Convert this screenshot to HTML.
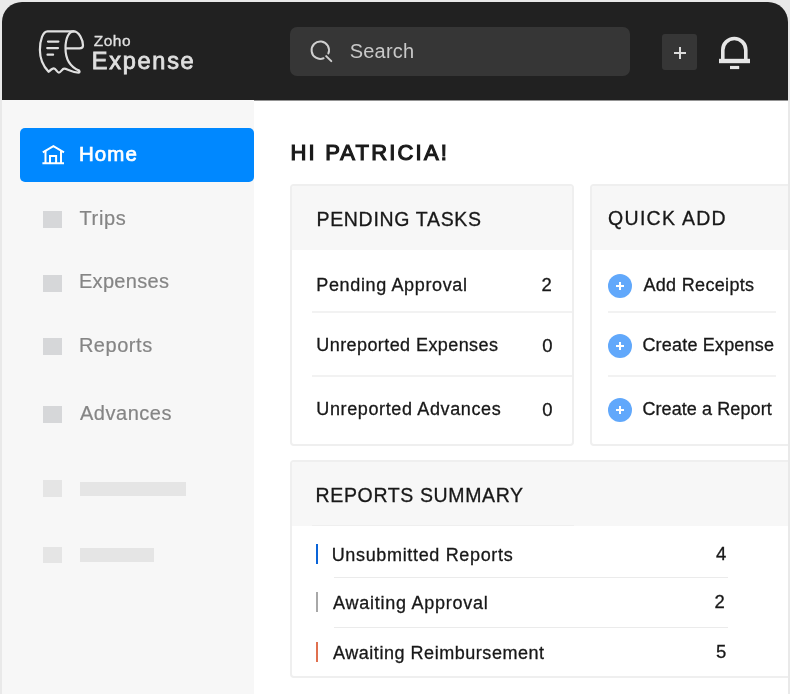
<!DOCTYPE html>
<html><head><meta charset="utf-8">
<style>
*{margin:0;padding:0;box-sizing:border-box}
html,body{width:790px;height:694px;overflow:hidden;background:#e9e9e9;font-family:"Liberation Sans",sans-serif;position:relative}
.frame{will-change:transform;position:absolute;left:2px;top:2px;width:786px;height:692px;background:#212121;border-radius:20px 20px 0 0;overflow:hidden}
.b{position:absolute}
.t{position:absolute;white-space:nowrap;line-height:1}
</style></head><body>
<div class="frame">
<div class="b" style="left:0;top:98px;width:786px;height:600px;background:#fff"></div>
<div class="b" style="left:0;top:98px;width:252px;height:600px;background:#f7f7f7"></div>
<div class="b" style="left:252px;top:98px;width:534px;height:1px;background:rgba(0,0,0,.42)"></div>
<!-- logo -->
<svg class="b" style="left:-2px;top:-2px" width="120" height="100" viewBox="0 0 120 100" fill="none" stroke="#e0e0e0" stroke-width="2.2" stroke-linecap="round" stroke-linejoin="round">
<path d="M73.7 31.4 L47.5 31.4 C43 31.4 39.9 40 39.9 50 C39.9 59 43.5 66.5 48.6 71.8 C50.5 70 52 68.4 53.9 68.4 C56 68.4 57 72.6 58.9 72.6 C60.8 72.6 62.2 68.6 64.1 68.6 C67 68.6 72 72.6 78.5 72.6 C80 72.6 79.8 71 78.8 70.5"/>
<path d="M79.5 48.3 L65.5 48.3 C65.5 38 68.8 31.4 73.7 31.4 C79 31.4 83 40 83 45.5 C83 47.3 81.5 48.3 79.5 48.3 M65.5 48.3 C65.5 60 70.8 67 78.8 70.5"/>
<path d="M48 41.6 L58.4 41.6 M47.2 48.1 L58 48.1 M47.5 54.7 L53.1 54.7"/>
</svg>
<!-- search -->
<div class="b" style="left:288px;top:25px;width:340px;height:49px;background:#363636;border-radius:7px"></div>
<svg class="b" style="left:-2px;top:-2px" width="790" height="100" viewBox="0 0 790 100" fill="none" stroke="#d0d0d0" stroke-width="2" stroke-linecap="round">
<path d="M323.56 58.27 A8.7 8.7 0 1 1 328.37 53.46"/>
<path d="M326.2 56.1 L331.3 61.1"/>
</svg>
<!-- plus btn -->
<div class="b" style="left:660px;top:32px;width:35px;height:36px;background:#363636;border-radius:3px"></div>
<div class="b" style="left:672px;top:49.5px;width:12px;height:2.4px;background:#dcdcdc"></div>
<div class="b" style="left:676.8px;top:45px;width:2.4px;height:12px;background:#dcdcdc"></div>
<!-- bell -->
<svg class="b" style="left:-2px;top:-2px" width="790" height="100" viewBox="0 0 790 100" fill="none" stroke="#e6e6e6">
<path d="M722.8 59 L722.8 50 A11.5 11.5 0 0 1 745.8 50 L745.8 59" stroke-width="3.6"/>
<path d="M719 61 L750 61" stroke-width="4.4"/>
<path d="M730 67.5 L739.2 67.5" stroke-width="3.2"/>
</svg>
<!-- home button -->
<div class="b" style="left:18px;top:126px;width:234px;height:54px;background:#0088ff;border-radius:5px"></div>
<svg class="b" style="left:-2px;top:-2px" width="260" height="200" viewBox="0 0 260 200" fill="none" stroke="#fff" stroke-width="2">
<path d="M42.8 152.4 L53.4 146.2 L64 152.4" stroke-linejoin="miter"/>
<path d="M45.5 150.6 L45.5 163 M61 150.6 L61 163 M42.4 163.2 L64 163.2"/>
<path d="M50 163 L50 156 L56.1 156 L56.1 163"/>
</svg>
<!-- nav placeholders -->
<div class="b" style="left:41px;top:209px;width:19px;height:17px;background:#d6d7d9"></div>
<div class="b" style="left:41px;top:273px;width:19px;height:17px;background:#d6d7d9"></div>
<div class="b" style="left:41px;top:336px;width:19px;height:17px;background:#d6d7d9"></div>
<div class="b" style="left:41px;top:404px;width:19px;height:17px;background:#d6d7d9"></div>
<div class="b" style="left:40.5px;top:478px;width:19.5px;height:16.5px;background:#e5e5e5"></div>
<div class="b" style="left:78px;top:480px;width:106px;height:14px;background:#e5e5e5"></div>
<div class="b" style="left:40.5px;top:544.5px;width:19.5px;height:16.5px;background:#e5e5e5"></div>
<div class="b" style="left:78px;top:546px;width:74px;height:14px;background:#e5e5e5"></div>
<!-- cards -->
<div class="b" style="left:288px;top:182px;width:284px;height:262px;border:2px solid #efefef;border-radius:4px;background:#fff;overflow:hidden">
  <div class="b" style="left:0;top:0;right:0;height:64px;background:#f7f7f7"></div>
</div>
<div class="b" style="left:588px;top:182px;width:300px;height:262px;border:2px solid #efefef;border-radius:4px;background:#fff;overflow:hidden">
  <div class="b" style="left:0;top:0;right:0;height:64px;background:#f7f7f7"></div>
</div>
<div class="b" style="left:288px;top:458px;width:600px;height:218px;border:2px solid #efefef;border-radius:4px;background:#fff;overflow:hidden">
  <div class="b" style="left:0;top:0;right:0;height:64px;background:#f7f7f7"></div>
</div>
<!-- separators -->
<div class="b" style="left:310px;top:309px;width:260px;height:2px;background:#f2f2f2"></div>
<div class="b" style="left:310px;top:373px;width:260px;height:2px;background:#f2f2f2"></div>
<div class="b" style="left:606px;top:309px;width:168px;height:2px;background:#f2f2f2"></div>
<div class="b" style="left:606px;top:373px;width:168px;height:2px;background:#f2f2f2"></div>
<div class="b" style="left:332px;top:575px;width:394px;height:1px;background:#ebebeb"></div>
<div class="b" style="left:332px;top:625px;width:394px;height:1px;background:#ebebeb"></div>
<div class="b" style="left:310px;top:523px;width:262px;height:1px;background:#efefef"></div>
<!-- bars -->
<div class="b" style="left:314px;top:542px;width:2px;height:20px;background:#0a64d8"></div>
<div class="b" style="left:314px;top:590px;width:2px;height:20px;background:#a8a8a8"></div>
<div class="b" style="left:314px;top:640px;width:2px;height:20px;background:#e0704f"></div>
<!-- quick add circles -->
<div class="b" style="left:606px;top:272px;width:24px;height:24px;border-radius:50%;background:#61a8fb"></div>
<div class="b" style="left:606px;top:332px;width:24px;height:24px;border-radius:50%;background:#61a8fb"></div>
<div class="b" style="left:606px;top:396px;width:24px;height:24px;border-radius:50%;background:#61a8fb"></div>
<div class="b" style="left:614px;top:283px;width:8px;height:2px;background:#fff"></div>
<div class="b" style="left:617px;top:280px;width:2px;height:8px;background:#fff"></div>
<div class="b" style="left:614px;top:343px;width:8px;height:2px;background:#fff"></div>
<div class="b" style="left:617px;top:340px;width:2px;height:8px;background:#fff"></div>
<div class="b" style="left:614px;top:407px;width:8px;height:2px;background:#fff"></div>
<div class="b" style="left:617px;top:404px;width:2px;height:8px;background:#fff"></div>

<div class="t" style="left:91.80px;top:30.56px;font-size:15.5px;color:#e0e0e0;letter-spacing:0.480px;-webkit-text-stroke:0.3px #e0e0e0;">Zoho</div>
<div class="t" style="left:89.80px;top:47.61px;font-size:23.5px;color:#e0e0e0;letter-spacing:1.740px;-webkit-text-stroke:0.8px #e0e0e0;">Expense</div>
<div class="t" style="left:347.80px;top:39.37px;font-size:20px;color:#c8c8c8;letter-spacing:0.180px;">Search</div>
<div class="t" style="left:76.90px;top:142.35px;font-size:20.5px;color:#ffffff;letter-spacing:1.080px;-webkit-text-stroke:0.7px #ffffff;">Home</div>
<div class="t" style="left:77.50px;top:205.97px;font-size:20px;color:#858585;letter-spacing:0.630px;-webkit-text-stroke:0.2px #858585;">Trips</div>
<div class="t" style="left:76.90px;top:269.17px;font-size:20px;color:#858585;letter-spacing:0.334px;-webkit-text-stroke:0.2px #858585;">Expenses</div>
<div class="t" style="left:76.90px;top:333.17px;font-size:20px;color:#858585;letter-spacing:0.540px;-webkit-text-stroke:0.2px #858585;">Reports</div>
<div class="t" style="left:78.00px;top:401.17px;font-size:20px;color:#858585;letter-spacing:0.514px;-webkit-text-stroke:0.2px #858585;">Advances</div>
<div class="t" style="left:288.50px;top:139.63px;font-size:22px;color:#1a1a1a;letter-spacing:2.176px;-webkit-text-stroke:1.2px #1a1a1a;">HI PATRICIA!</div>
<div class="t" style="left:314.50px;top:207.59px;font-size:19.5px;color:#181818;letter-spacing:0.675px;-webkit-text-stroke:0.3px #181818;">PENDING TASKS</div>
<div class="t" style="left:314.30px;top:274.46px;font-size:18px;color:#181818;letter-spacing:0.636px;-webkit-text-stroke:0.3px #181818;">Pending Approval</div>
<div class="t" style="left:314.30px;top:334.26px;font-size:18px;color:#181818;letter-spacing:0.420px;-webkit-text-stroke:0.3px #181818;">Unreported Expenses</div>
<div class="t" style="left:314.30px;top:398.26px;font-size:18px;color:#181818;letter-spacing:0.630px;-webkit-text-stroke:0.3px #181818;">Unreported Advances</div>
<div class="t" style="left:539.50px;top:274.12px;font-size:18.5px;color:#181818;letter-spacing:0.000px;-webkit-text-stroke:0.3px #181818;">2</div>
<div class="t" style="left:540.20px;top:334.82px;font-size:18.5px;color:#181818;letter-spacing:0.000px;-webkit-text-stroke:0.3px #181818;">0</div>
<div class="t" style="left:540.20px;top:398.92px;font-size:18.5px;color:#181818;letter-spacing:0.000px;-webkit-text-stroke:0.3px #181818;">0</div>
<div class="t" style="left:606.10px;top:206.79px;font-size:19.5px;color:#181818;letter-spacing:1.282px;-webkit-text-stroke:0.3px #181818;">QUICK ADD</div>
<div class="t" style="left:641.40px;top:274.46px;font-size:18px;color:#181818;letter-spacing:0.327px;-webkit-text-stroke:0.3px #181818;">Add Receipts</div>
<div class="t" style="left:640.40px;top:334.46px;font-size:18px;color:#181818;letter-spacing:0.194px;-webkit-text-stroke:0.3px #181818;">Create Expense</div>
<div class="t" style="left:640.40px;top:398.46px;font-size:18px;color:#181818;letter-spacing:0.090px;-webkit-text-stroke:0.3px #181818;">Create a Report</div>
<div class="t" style="left:313.60px;top:483.89px;font-size:19.5px;color:#181818;letter-spacing:0.630px;-webkit-text-stroke:0.3px #181818;">REPORTS SUMMARY</div>
<div class="t" style="left:329.70px;top:543.66px;font-size:18px;color:#181818;letter-spacing:0.660px;-webkit-text-stroke:0.3px #181818;">Unsubmitted Reports</div>
<div class="t" style="left:331.00px;top:591.66px;font-size:18px;color:#181818;letter-spacing:0.754px;-webkit-text-stroke:0.3px #181818;">Awaiting Approval</div>
<div class="t" style="left:331.00px;top:641.66px;font-size:18px;color:#181818;letter-spacing:0.540px;-webkit-text-stroke:0.3px #181818;">Awaiting Reimbursement</div>
<div class="t" style="left:713.90px;top:543.12px;font-size:18.5px;color:#181818;letter-spacing:0.000px;-webkit-text-stroke:0.3px #181818;">4</div>
<div class="t" style="left:712.50px;top:591.22px;font-size:18.5px;color:#181818;letter-spacing:0.000px;-webkit-text-stroke:0.3px #181818;">2</div>
<div class="t" style="left:713.90px;top:641.32px;font-size:18.5px;color:#181818;letter-spacing:0.000px;-webkit-text-stroke:0.3px #181818;">5</div>
</div>
</body></html>
